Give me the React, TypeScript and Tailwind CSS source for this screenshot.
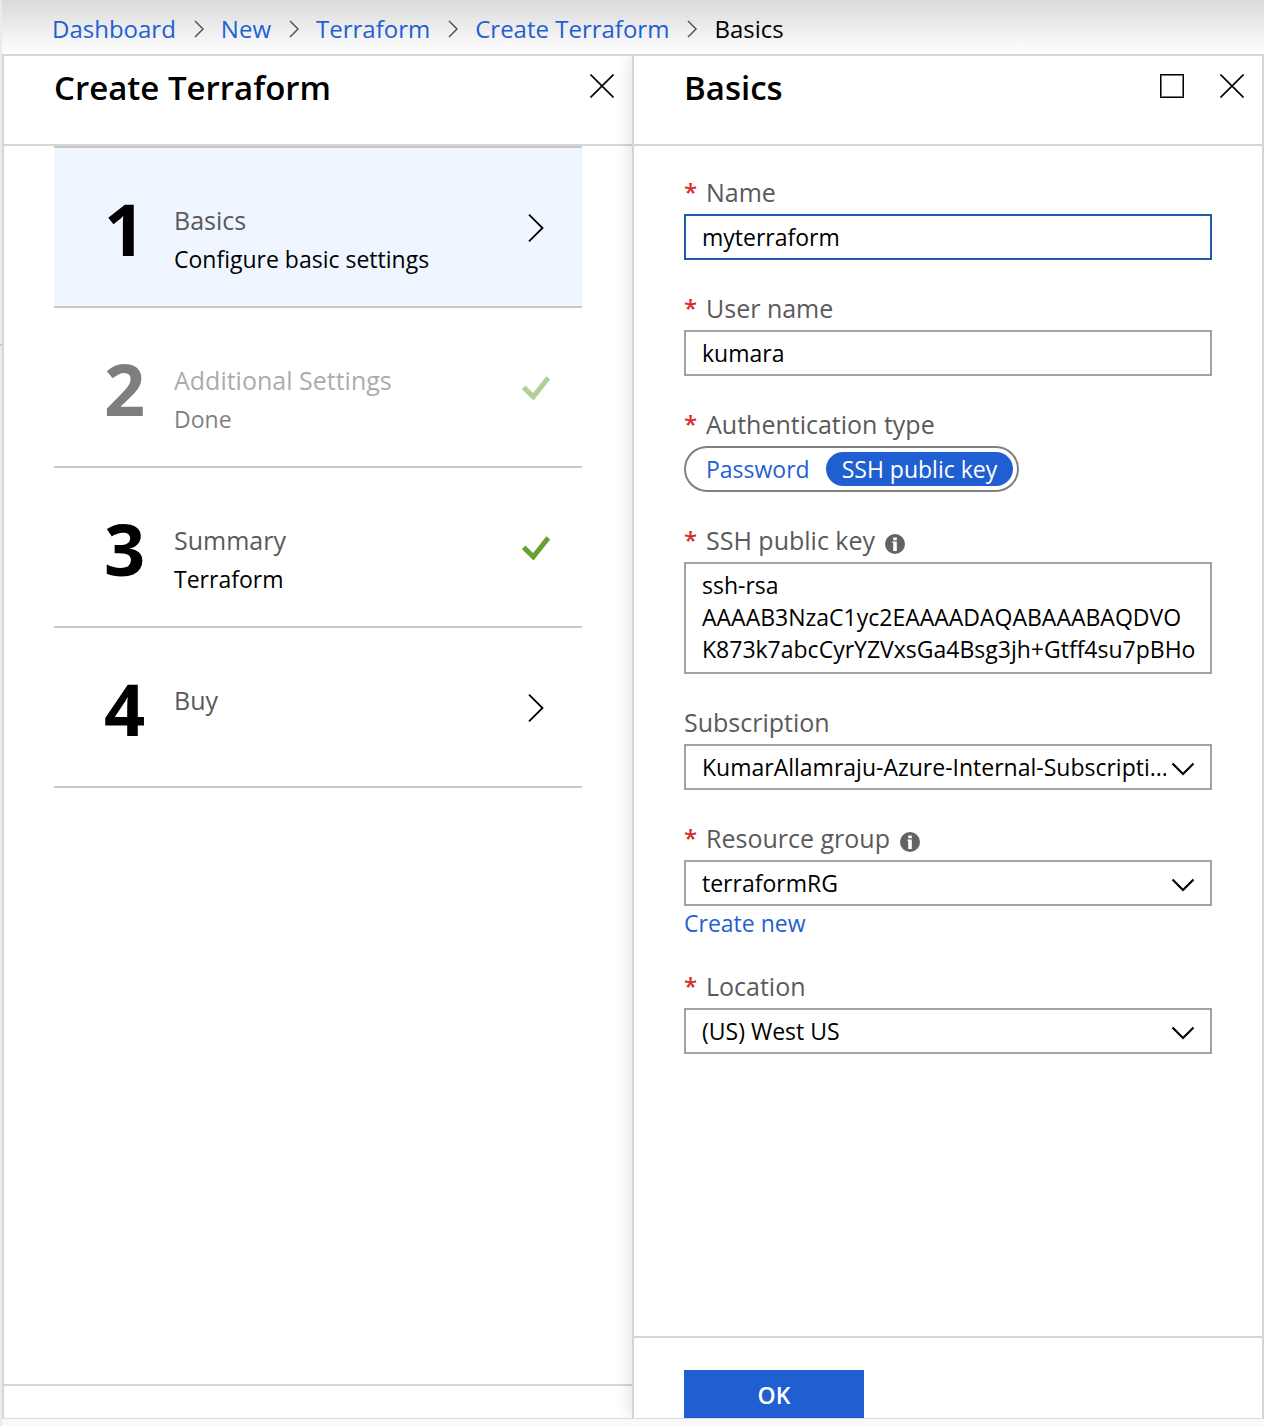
import { useState, type ReactNode } from "react";

const crumbs = ["Dashboard", "New", "Terraform", "Create Terraform"];

type StepIcon = "chevron" | "check";
type Step = { title: string; detail?: string; icon: StepIcon; selected?: boolean; faded?: boolean };

const steps: Step[] = [
  { title: "Basics", detail: "Configure basic settings", icon: "chevron", selected: true },
  { title: "Additional Settings", detail: "Done", icon: "check", faded: true },
  { title: "Summary", detail: "Terraform", icon: "check" },
  { title: "Buy", icon: "chevron" },
];

const sshKey = `ssh-rsa
AAAAB3NzaC1yc2EAAAADAQABAAABAQDVO
K873k7abcCyrYZVxsGa4Bsg3jh+Gtff4su7pBHo`;

function CrumbArrow() {
  return (
    <svg className="h-[18px] w-3 shrink-0" viewBox="0 0 12 18" fill="none" stroke="#555" strokeWidth="1.5" aria-hidden="true">
      <path d="M2 1l8 8-8 8" />
    </svg>
  );
}

function CloseIcon() {
  return (
    <svg className="size-6" viewBox="0 0 24 24" fill="none" stroke="#000" strokeWidth="1.6" aria-hidden="true">
      <path d="M0.5 0.5l23 23M23.5 0.5l-23 23" />
    </svg>
  );
}

function StepChevron() {
  return (
    <svg className="size-7" viewBox="0 0 28 28" fill="none" stroke="#000" strokeWidth="1.8" aria-hidden="true">
      <path d="M7 0.7L20.5 14 7 27.3" />
    </svg>
  );
}

function CheckIcon() {
  return (
    <svg className="size-7" viewBox="0 0 28 28" fill="none" stroke="#68a12f" strokeWidth="5" aria-hidden="true">
      <path d="M1.7 13.3L11.3 22.7 26.3 3.8" />
    </svg>
  );
}

function InfoIcon() {
  return (
    <svg className="mt-2 ml-[10px] size-5" viewBox="0 0 20 20" role="img" aria-label="More information">
      <circle cx="10" cy="10" r="10" fill="#636363" />
      <path fill="#fff" d="M8.2 3.4h3.6v2.8H8.2zM7.4 7.6h4.4V17H8.2V9h-.8z" />
    </svg>
  );
}

function Field({ id, label, required, info, children }: { id: string; label: string; required?: boolean; info?: boolean; children: ReactNode }) {
  return (
    <div>
      <div className="flex h-9 items-start">
        {required && <span className="w-[22px] text-2xl leading-7 font-semibold text-[#d92c2c]" aria-hidden="true">*</span>}
        <label id={`${id}-label`} htmlFor={id} className="text-[25px] leading-7 text-[#5a5a5a]">{label}</label>
        {info && <InfoIcon />}
      </div>
      {children}
    </div>
  );
}

function Dropdown({ id, options }: { id: string; options: string[] }) {
  return (
    <div className="grid items-center">
      <select id={id} className="col-start-1 row-start-1 h-[46px] w-full appearance-none rounded-none border-2 border-[#a3a3a3] bg-white pr-11 pl-4 text-[23px] text-black">
        {options.map((o) => <option key={o}>{o}</option>)}
      </select>
      <svg className="pointer-events-none col-start-1 row-start-1 mr-[17px] h-6 w-6 justify-self-end" viewBox="0 0 24 24" fill="none" stroke="#000" strokeWidth="2.2" aria-hidden="true">
        <path d="M1.5 8.5L12 19 22.5 8.5" />
      </svg>
    </div>
  );
}

function PanelHeader({ title, children }: { title: string; children: ReactNode }) {
  return (
    <header className="flex h-[90px] shrink-0 items-start justify-between border-b-2 border-[#d6d6d6] pr-[18px] pl-[50px]">
      <h2 className="pt-2 text-[33px] leading-12 font-semibold">{title}</h2>
      <div className="flex gap-9 pt-[18px]">{children}</div>
    </header>
  );
}

export default function App() {
  const [auth, setAuth] = useState("SSH public key");
  const [name, setName] = useState("myterraform");
  const [user, setUser] = useState("kumara");

  return (
    <div className="flex min-h-screen bg-white font-['Open_Sans',sans-serif] text-black">
      <div className="w-[2px] shrink-0 bg-[#ebebeb]">
        <div className="mt-[344px] h-[2px] bg-[#c8c8c8]" />
      </div>
      <div className="flex min-w-0 flex-1 flex-col">
        <nav aria-label="Breadcrumb" className="flex h-[54px] shrink-0 items-center bg-linear-to-b from-[#dadada] to-white pl-[50px] text-[24px] leading-8">
          <ol className="flex items-center gap-4 pt-1">
            {crumbs.map((c) => (
              <li key={c} className="flex items-center gap-[17px]">
                <a href="#" className="text-[#1f5fd2]">{c}</a>
                <CrumbArrow />
              </li>
            ))}
            <li aria-current="page">Basics</li>
          </ol>
        </nav>

        <main className="grid flex-1 grid-cols-[1fr_2px_1fr] overflow-hidden border-2 border-b-0 border-[#d6d6d6]">
          <section className="flex min-w-0 flex-col">
            <PanelHeader title="Create Terraform">
              <button type="button" aria-label="Close Create Terraform"><CloseIcon /></button>
            </PanelHeader>
            <ol className="mx-[50px] flex-1">
              {steps.map((s, i) => (
                <li key={s.title} className="border-b-2 border-[#c8c8c8] first:border-t-2">
                  <button type="button" className={`flex h-[158px] w-full items-center pt-[2px] pr-8 pl-[50px] text-left ${s.selected ? "bg-[#eff6ff]" : ""}`}>
                    <span className={`w-[70px] text-[72px] leading-[80px] font-bold ${s.faded ? "opacity-50" : ""}`}>{i + 1}</span>
                    <span className={`flex h-[78px] flex-1 flex-col ${s.faded ? "opacity-50" : ""}`}>
                      <span className="pt-[15px] text-[25px] leading-8 text-[#5a5a5a]">{s.title}</span>
                      {s.detail && <span className="pt-[7px] text-[23px] leading-8">{s.detail}</span>}
                    </span>
                    <span className={s.faded ? "opacity-50" : ""}>{s.icon === "check" ? <CheckIcon /> : <StepChevron />}</span>
                  </button>
                </li>
              ))}
            </ol>
            <footer className="h-[34px] shrink-0 border-t-2 border-[#d6d6d6]" />
          </section>

          <div className="z-20 bg-[#d6d6d6]" />

          <section className="z-10 flex min-w-0 flex-col bg-white shadow-[0_0_18px_rgba(0,0,0,0.18)]">
            <PanelHeader title="Basics">
              <button type="button" aria-label="Maximize" className="size-6 border border-black outline -outline-offset-2 outline-[#777]" />
              <button type="button" aria-label="Close Basics"><CloseIcon /></button>
            </PanelHeader>
            <form className="flex flex-1 flex-col gap-[34px] px-[50px] py-8" onSubmit={(e) => e.preventDefault()}>
              <Field id="name" label="Name" required>
                <input id="name" value={name} onChange={(e) => setName(e.target.value)} className="block h-[46px] w-full border-2 border-[#1f5aa8] px-4 text-[23px] outline-none" />
              </Field>
              <Field id="user" label="User name" required>
                <input id="user" value={user} onChange={(e) => setUser(e.target.value)} className="block h-[46px] w-full border-2 border-[#a3a3a3] px-4 text-[23px] outline-none" />
              </Field>
              <Field id="auth" label="Authentication type" required>
                <div id="auth" role="radiogroup" aria-labelledby="auth-label" className="relative flex h-[46px] w-fit items-center rounded-full border-2 border-[#808080] p-1 text-[23px]">
                  {["Password", "SSH public key"].map((o) => (
                    <label key={o} className="flex h-[34px] cursor-pointer items-center rounded-full px-4 text-[#1f5fd2] has-checked:bg-[#1f5fd2] has-checked:text-white">
                      <input type="radio" name="auth" className="sr-only" checked={auth === o} onChange={() => setAuth(o)} />
                      {o}
                    </label>
                  ))}
                </div>
              </Field>
              <Field id="ssh" label="SSH public key" required info>
                <textarea id="ssh" defaultValue={sshKey} className="block h-28 w-full resize-none overflow-hidden border-2 border-[#a3a3a3] px-4 py-[5px] text-[23px] leading-8 whitespace-pre outline-none" />
              </Field>
              <Field id="subscription" label="Subscription">
                <Dropdown id="subscription" options={["KumarAllamraju-Azure-Internal-Subscripti..."]} />
              </Field>
              <Field id="group" label="Resource group" required info>
                <Dropdown id="group" options={["terraformRG"]} />
                <a href="#" className="block h-8 w-fit pt-[1px] text-[23px] leading-8 text-[#1f5fd2]">Create new</a>
              </Field>
              <Field id="location" label="Location" required>
                <Dropdown id="location" options={["(US) West US"]} />
              </Field>
            </form>
            <footer className="h-[82px] shrink-0 border-t-2 border-[#d6d6d6] px-[50px] pt-8">
              <button type="button" className="h-12 w-[180px] bg-[#1f5fd2] pt-[2px] text-[23px] font-semibold text-white">OK</button>
            </footer>
          </section>
        </main>
        <div className="h-2 shrink-0 border-t border-[#dcdcdc] bg-[#f9f9f9]" />
      </div>
    </div>
  );
}
